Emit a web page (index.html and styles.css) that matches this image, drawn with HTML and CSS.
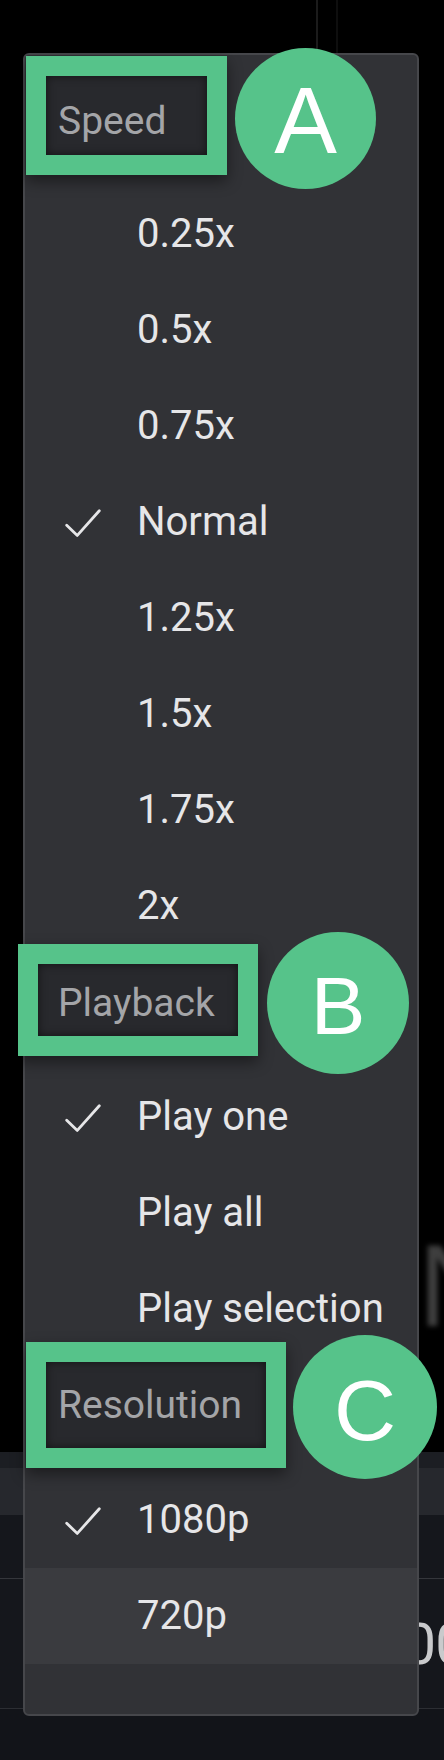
FILE: index.html
```html
<!DOCTYPE html>
<html lang="en">
<head>
<meta charset="utf-8">
<title>Settings menu</title>
<link rel="stylesheet" href="styles.css">
</head>
<body>
<div class="page">
  <div class="video">
    <span class="video-caption">N</span>
  </div>
  <div class="band band-top"></div>
  <div class="band band-mid"></div>
  <div class="table">
    <div class="table-row table-row-head"></div>
    <div class="table-row table-row-data"><span class="cell-num">100</span></div>
  </div>

  <div class="menu">
    <div class="section-head section-head-a">
      <div class="mark-box mark-box-a"></div>
      <span class="head-text">Speed</span>
      <div class="badge badge-a"><span class="badge-letter badge-letter-a">A</span></div>
    </div>
    <div class="item"><span class="check-slot"></span><span class="item-text">0.25x</span></div>
    <div class="item"><span class="check-slot"></span><span class="item-text">0.5x</span></div>
    <div class="item"><span class="check-slot"></span><span class="item-text">0.75x</span></div>
    <div class="item"><span class="check-slot"><svg class="check" viewBox="0 0 36 30" width="36" height="30"><polyline points="1.7,17.2 12.3,27.4 34.3,2.8"/></svg></span><span class="item-text">Normal</span></div>
    <div class="item"><span class="check-slot"></span><span class="item-text">1.25x</span></div>
    <div class="item"><span class="check-slot"></span><span class="item-text">1.5x</span></div>
    <div class="item"><span class="check-slot"></span><span class="item-text">1.75x</span></div>
    <div class="item"><span class="check-slot"></span><span class="item-text">2x</span></div>

    <div class="section-head section-head-b">
      <div class="mark-box mark-box-b"></div>
      <span class="head-text">Playback</span>
      <div class="badge badge-b"><span class="badge-letter badge-letter-b">B</span></div>
    </div>
    <div class="item"><span class="check-slot"><svg class="check" viewBox="0 0 36 30" width="36" height="30"><polyline points="1.7,17.2 12.3,27.4 34.3,2.8"/></svg></span><span class="item-text">Play one</span></div>
    <div class="item"><span class="check-slot"></span><span class="item-text">Play all</span></div>
    <div class="item"><span class="check-slot"></span><span class="item-text">Play selection</span></div>

    <div class="section-head section-head-c">
      <div class="mark-box mark-box-c"></div>
      <span class="head-text">Resolution</span>
      <div class="badge badge-c"><span class="badge-letter badge-letter-c">C</span></div>
    </div>
    <div class="item"><span class="check-slot"><svg class="check" viewBox="0 0 36 30" width="36" height="30"><polyline points="1.7,17.2 12.3,27.4 34.3,2.8"/></svg></span><span class="item-text">1080p</span></div>
    <div class="item item-hover"><span class="check-slot"></span><span class="item-text">720p</span></div>
  </div>
</div>
</body>
</html>
```

FILE: styles.css
```css
* { box-sizing: border-box; }

html, body {
  margin: 0;
  padding: 0;
  background: #000;
}

.page {
  position: relative;
  width: 444px;
  height: 1760px;
  overflow: hidden;
  background: #121419;
  font-family: Roboto, "Liberation Sans", sans-serif;
}

/* backdrop: the video area and the toolbar under the menu */
.video {
  height: 1452px;
  background:
    linear-gradient(to right, transparent 316px, #1b1b1b 316px, #1b1b1b 318px, transparent 318px,
      transparent 336px, #0e0e0e 336px, #0e0e0e 338px, transparent 338px),
    #000;
  display: flex;
  justify-content: flex-end;
  align-items: flex-end;
  padding-bottom: 108px;
  overflow: hidden;
}

.video-caption {
  font-family: "Liberation Sans", sans-serif;
  font-size: 116px;
  line-height: 1;
  color: #3e3e3e;
  filter: blur(2.5px);
  margin-right: -58px;
}

.band-top { height: 16px; background: #1c1e23; }
.band-mid { height: 47px; background: #26282d; }

.table { background: #15171c; }
.table-row-head {
  height: 64px;
  border-bottom: 1px solid #34363b;
}
.table-row-data {
  height: 130px;
  border-bottom: 1px solid #2c2e33;
  display: flex;
  align-items: center;
  padding-left: 372px;
  white-space: nowrap;
}
.cell-num {
  font-family: Roboto, sans-serif;
  font-size: 58px;
  color: #c9cacc;
  letter-spacing: -1px;
}

/* the menu overlay */
.menu {
  position: absolute;
  left: 23px;
  top: 53px;
  width: 396px;
  padding: 16px 0 50px;
  background: #313236;
  border: 2px solid #46474b;
  border-radius: 6px;
}

.section-head {
  position: relative;
  height: 115px;
  padding: 24px 0 0 33px;
}
.section-head-a { padding-top: 26px; }
.section-head-b { padding-top: 25px; }

.head-text {
  position: relative;
  display: block;
  font-size: 39px;
  line-height: 48px;
  color: #a4a5a8;
}

.item {
  height: 96px;
  display: flex;
  align-items: center;
  padding-left: 40px;
  color: #e6e6e8;
  font-size: 40px;
}
.item-hover { background: #3a3b3f; }

.check-slot {
  width: 72px;
  height: 30px;
  flex: none;
  display: flex;
  align-items: center;
}
.check {
  display: block;
  fill: none;
  stroke: #e6e6e8;
  stroke-width: 2.8;
  stroke-linecap: round;
  stroke-linejoin: round;
  margin-top: 2px;
}

.item-text { line-height: 48px; }

/* annotation overlays */
.mark-box {
  position: absolute;
  border: 20px solid #56c38a;
  background: #28292d;
  box-shadow: 0 6px 14px rgba(0, 0, 0, 0.45), inset 0 0 10px rgba(0, 0, 0, 0.55);
}
.mark-box-a { left: 1px; top: -15px; width: 201px; height: 119px; }
.mark-box-b { left: -7px; top: -10px; width: 240px; height: 112px; }
.mark-box-c { left: 1px; top: -15px; width: 260px; height: 126px; }

.badge {
  position: absolute;
  border-radius: 50%;
  background: #56c38a;
  display: flex;
  align-items: center;
  justify-content: center;
}
.badge-a { left: 210px; top: -23px; width: 141px; height: 141px; }
.badge-b { left: 242px; top: -22px; width: 142px; height: 142px; }
.badge-c { left: 268px; top: -22px; width: 144px; height: 144px; }

.badge-letter {
  font-family: "Liberation Sans", Arial, sans-serif;
  color: #fff;
  line-height: 1;
}
.badge-letter-a { font-size: 94px; margin-top: 4px; }
.badge-letter-b { font-size: 82px; margin-top: 6px; }
.badge-letter-c { font-size: 86px; margin-top: 6px; }
```
